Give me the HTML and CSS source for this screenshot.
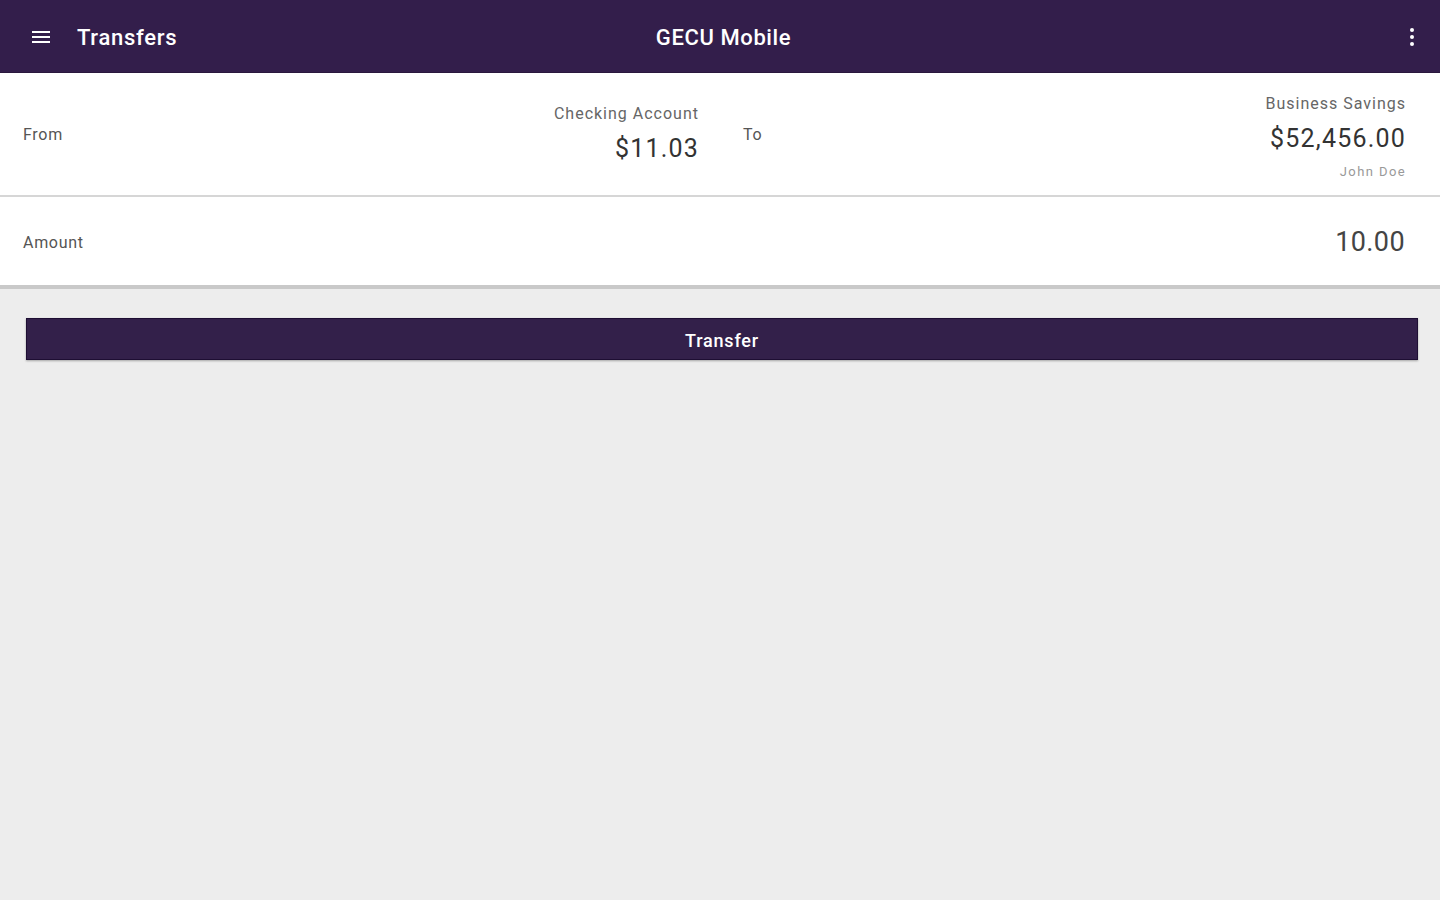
FILE: index.html
```html
<!DOCTYPE html>
<html>
<head>
<meta charset="utf-8">
<link rel="stylesheet" href="styles.css">
</head>
<body>
<header class="appbar">
  <div class="appbar-left">
    <svg class="icon-menu" width="24" height="24" viewBox="0 0 24 24"><path d="M3 6h18v2H3zM3 11h18v2H3zM3 16h18v2H3z" fill="#fff"/></svg>
    <span class="appbar-title">Transfers</span>
  </div>
  <div class="appbar-center">GECU Mobile</div>
  <div class="appbar-right">
    <svg class="icon-more" width="24" height="24" viewBox="0 0 24 24"><circle cx="12" cy="5" r="2" fill="#fff"/><circle cx="12" cy="12" r="2" fill="#fff"/><circle cx="12" cy="19" r="2" fill="#fff"/></svg>
  </div>
</header>
<main class="content">
  <section class="card">
    <div class="row row-accounts">
      <div class="half half-from">
        <span class="label">From</span>
        <div class="account">
          <div class="acct-name">Checking Account</div>
          <div class="acct-balance">$11.03</div>
        </div>
      </div>
      <div class="half half-to">
        <span class="label">To</span>
        <div class="account account-to">
          <div class="acct-name">Business Savings</div>
          <div class="acct-balance">$52,456.00</div>
          <div class="acct-owner">John Doe</div>
        </div>
      </div>
    </div>
    <div class="row row-amount">
      <span class="label">Amount</span>
      <span class="amount">10.00</span>
    </div>
  </section>
  <div class="actions">
    <button class="btn-transfer">Transfer</button>
  </div>
</main>
</body>
</html>
```
FILE: styles.css
```css
* { box-sizing: border-box; }
html, body { margin: 0; padding: 0; }
body {
  width: 1440px;
  height: 900px;
  background: #ededed;
  font-family: Roboto, "Liberation Sans", sans-serif;
  overflow: hidden;
}
.appbar {
  height: 73px;
  background: #331e4b;
  display: flex;
  align-items: center;
  color: #fff;
  border-bottom: 1px solid #2a173d;
  padding-top: 2px;
}
.appbar-left {
  display: flex;
  align-items: center;
  padding-left: 29px;
  flex: 1;
}
.icon-menu { display: block; }
.appbar-title {
  margin-left: 24px;
  font-size: 22px;
  font-weight: 500;
  letter-spacing: 0.7px;
}
.appbar-center {
  font-size: 22px;
  font-weight: 500;
  letter-spacing: 0.6px;
  flex: 1;
  text-align: center;
  padding-right: 6px;
}
.appbar-right {
  flex: 1;
  display: flex;
  justify-content: flex-end;
  padding-right: 16px;
}
.icon-more { display: block; }
.card { background: #fff; }
.row-accounts {
  display: flex;
  height: 124px;
  border-bottom: 2px solid #d6d6d6;
}
.half {
  width: 720px;
  display: flex;
  align-items: center;
  justify-content: space-between;
}
.half-from { padding: 0 21px 0 23px; }
.half-to { padding: 0 34px 0 23px; }
.label {
  font-size: 16px;
  color: #555;
  letter-spacing: 0.7px;
}
.account { text-align: right; }
.account-to { margin-top: 5px; }
.acct-name {
  font-size: 16px;
  color: #666;
  line-height: 20px;
  letter-spacing: 1px;
}
.acct-balance {
  font-size: 25px;
  color: #333;
  line-height: 30px;
  margin-top: 10px;
  letter-spacing: 1.2px;
}
.acct-owner {
  font-size: 13px;
  color: #999;
  line-height: 16px;
  margin-top: 10px;
  letter-spacing: 1.4px;
}
.row-amount {
  height: 92px;
  display: flex;
  align-items: center;
  justify-content: space-between;
  padding: 2px 35px 0 23px;
  border-bottom: 4px solid #c9c9c9;
}
.amount {
  font-size: 27px;
  color: #444;
  letter-spacing: 0.4px;
}
.actions {
  padding: 29px 22px 0 26px;
}
.btn-transfer {
  display: block;
  width: 100%;
  height: 42px;
  background: #33204a;
  border: 1px solid #1e0e33;
  color: #fff;
  font-family: Roboto, "Liberation Sans", sans-serif;
  font-size: 18px;
  font-weight: 500;
  letter-spacing: 0.8px;
  box-shadow: 0 1px 2px rgba(0,0,0,0.3);
  padding: 3px 0 0;
  cursor: pointer;
}
```
